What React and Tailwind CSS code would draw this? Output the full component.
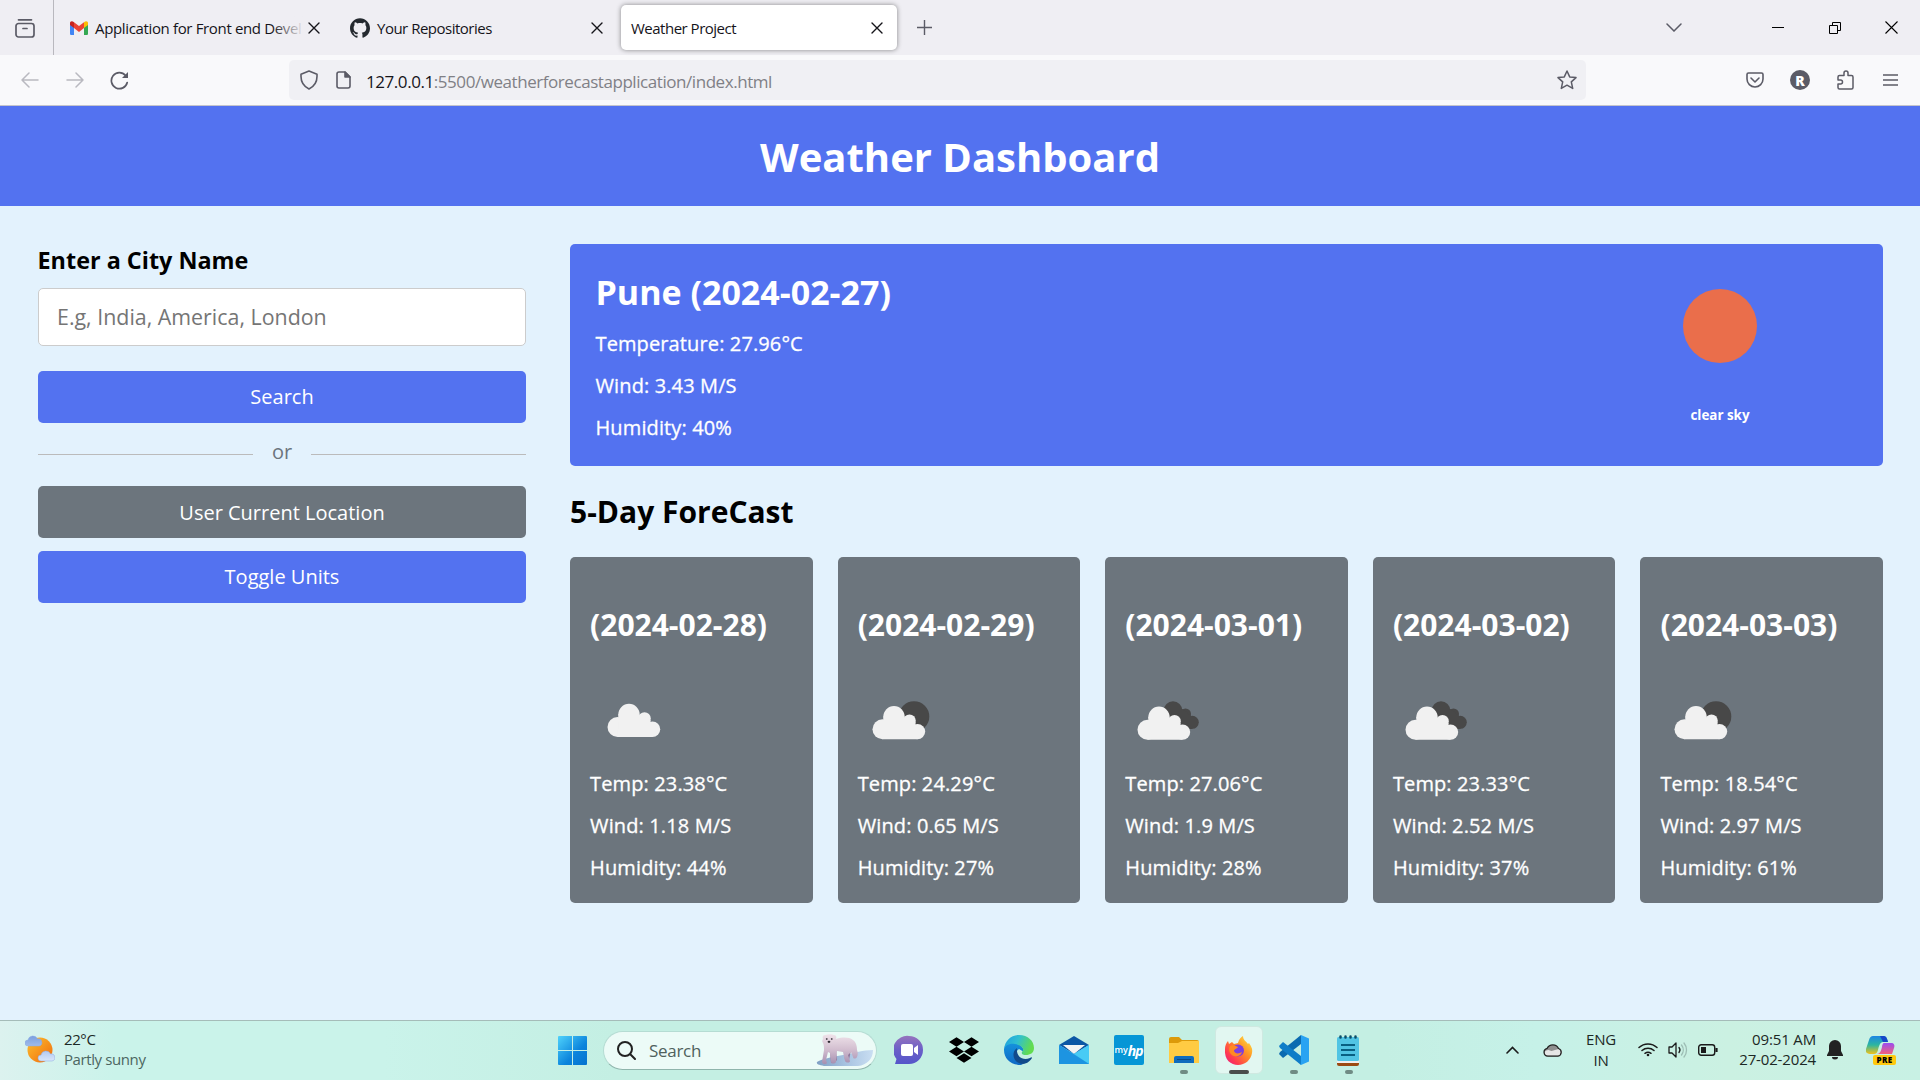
import React from "react";
import { SiDropbox, SiGithub } from "react-icons/si";

const TabX = () => (
  <svg className="h-3 w-3 shrink-0" viewBox="0 0 12 12" fill="none" stroke="#15141a" strokeWidth="1.4" strokeLinecap="round"><path d="M1 1l10 10M11 1L1 11" /></svg>
);

const frontOffset = { sun: "translate(-3 2.3)", cloud: "translate(-5 2.8)" };

const Cloud = ({ behind }) => (
  <svg className="ml-[6px] h-[60px] w-[76px]" viewBox="596.5 690 76 60">
    {behind === "sun" && <circle cx="646.500" cy="716.500" r="15.300" fill="#484848" />}
    {behind === "cloud" && (
      <g fill="#484848"><circle cx="638.500" cy="710.500" r="9.300" /><circle cx="651" cy="714" r="5.500" /><circle cx="657.800" cy="722.300" r="6.500" /><path d="M636 712l12-3 10 8v12h-14z" /></g>
    )}
    <g fill="#f1f1f1" transform={behind ? frontOffset[behind] : undefined}>
      <circle cx="618" cy="727" r="10" /><circle cx="629.500" cy="714.500" r="10.700" /><circle cx="645" cy="718.500" r="6.300" /><circle cx="653" cy="729.300" r="7.700" />
      <path d="M619 722v-8h18l14 6v10l2 7h-35z" />
    </g>
  </svg>
);

const forecast = [
  ["(2024-02-28)", "23.38", "1.18", "44", null],
  ["(2024-02-29)", "24.29", "0.65", "27", "sun"],
  ["(2024-03-01)", "27.06", "1.9", "28", "cloud"],
  ["(2024-03-02)", "23.33", "2.52", "37", "cloud"],
  ["(2024-03-03)", "18.54", "2.97", "61", "sun"],
];

function TabStrip() {
  return (
    <div className="flex h-[55px] items-center bg-[#efeef3] text-[15px] tracking-[-0.45px] text-[#15141a]">
      <div className="flex h-full w-[54px] items-center border-r border-[#b9b8be] pl-[15px]">
        <svg className="h-5 w-5" viewBox="0 0 20 20" fill="none" stroke="#5b5b66" strokeWidth="1.7" strokeLinecap="round"><rect x="1" y="5.500" width="18" height="13.500" rx="2.500" /><path d="M3.500 1.800h13M8 10.500h4" /></svg>
      </div>
      <div className="flex w-[281px] items-center pl-4">
        <svg className="h-[14px] w-[18px] shrink-0" viewBox="0 0 18 14"><path fill="#4285f4" d="M0 2v10.700C0 13.400.6 14 1.300 14H4V6z" /><path fill="#34a853" d="M14 14h2.700c.7 0 1.300-.6 1.300-1.300V2l-4 4z" /><path fill="#ea4335" d="M4 7V1.200l5 3.900 5-3.900V7l-5 3.900z" /><path fill="#c5221f" d="M0 2.200V4l4 3V1.200C2 -.4 0 .3 0 2.200z" /><path fill="#fbbc04" d="M14 1.200V7l4-3V2.200c0-1.900-2-2.600-4-1z" /></svg>
        <div className="relative ml-[7px] w-[209px] pt-[2px] whitespace-nowrap tracking-[-0.35px]">Application for Front end Devel<div className="absolute inset-y-0 right-0 w-8 bg-gradient-to-r from-transparent to-[#efeef3]" /></div>
        <div className="ml-[4px]"><TabX /></div>
      </div>
      <div className="flex w-[286px] items-center pl-[15px]">
        <SiGithub className="h-5 w-5 text-[#24292f]" />
        <span className="ml-[7px] pt-[2px] tracking-[-0.5px]">Your Repositories</span>
        <div className="mr-[18px] ml-auto"><TabX /></div>
      </div>
      <div className="flex h-[45px] w-[276px] items-center rounded-[5px] bg-white pr-[14px] pl-[10px] shadow-[0_0_5px_rgba(0,0,0,0.45)]">
        <span className="pt-[2px] tracking-[-0.5px]">Weather Project</span>
        <div className="ml-auto"><TabX /></div>
      </div>
      <svg className="ml-[20px] h-[15px] w-[15px]" viewBox="0 0 15 15" stroke="#5b5b66" strokeWidth="1.400"><path d="M7.500 0v15M0 7.500h15" /></svg>
      <svg className="ml-auto h-[9px] w-4" viewBox="0 0 16 9" fill="none" stroke="#5b5b66" strokeWidth="1.500" strokeLinecap="round"><path d="M1 1l7 7 7-7" /></svg>
      <div className="ml-[90px] h-px w-3 bg-black" />
      <svg className="ml-[45px] h-3 w-3" viewBox="0 0 12 12" fill="none" stroke="#000"><path d="M.5 3.500h8v8h-8zM3.500 3V.5h8v8H9" /></svg>
      <svg className="mr-[22px] ml-[44px] h-[13px] w-[13px]" viewBox="0 0 13 13" fill="none" stroke="#000" strokeWidth="1.100"><path d="M.5.5l12 12M12.500.5l-12 12" /></svg>
    </div>
  );
}

function Toolbar() {
  return (
    <div className="flex h-[51px] items-center border-b border-[#c4c4cc] bg-[#f9f9fb]">
      <svg className="ml-[21px] h-[18px] w-[18px]" viewBox="0 0 18 18" fill="none" stroke="#b9b9c0" strokeWidth="1.500" strokeLinecap="round" strokeLinejoin="round"><path d="M17 9H1M8 2L1 9l7 7" /></svg>
      <svg className="ml-[27px] h-[18px] w-[18px]" viewBox="0 0 18 18" fill="none" stroke="#b9b9c0" strokeWidth="1.500" strokeLinecap="round" strokeLinejoin="round"><path d="M1 9h16M10 2l7 7-7 7" /></svg>
      <svg className="mt-px ml-[26px] h-[19px] w-[19px]" viewBox="0 0 19 19" fill="none" stroke="#5b5b66" strokeWidth="1.700" strokeLinecap="round"><path d="M17.200 11.500A8 8 0 1 1 15.500 4.500" /><path d="M18 1v6h-6z" fill="#5b5b66" stroke="none" /></svg>
      <div className="ml-[160px] flex h-10 w-[1297px] items-center rounded-[5px] bg-[#f0f0f4] pl-[11px]">
        <svg className="h-5 w-[18px]" viewBox="0 0 18 20" fill="none" stroke="#5b5b66" strokeWidth="1.600" strokeLinejoin="round"><path d="M9 1l8 3.200v2.300c0 5.500-3 10-8 12.500-5-2.500-8-7-8-12.500V4.200z" /></svg>
        <svg className="ml-[18px] h-[18px] w-[15px]" viewBox="0 0 15 18" fill="none" stroke="#5b5b66" strokeWidth="1.600" strokeLinejoin="round"><path d="M3 1h6l5 5v9a2 2 0 0 1-2 2H3a2 2 0 0 1-2-2V3a2 2 0 0 1 2-2z" /><path fill="#5b5b66" d="M9 1v5h5z" /></svg>
        <span className="ml-[15px] pt-[3px] text-[17px] tracking-[-0.44px] text-[#808086]"><span className="text-[#15141a]">127.0.0.1</span>:5500/weatherforecastapplication/index.html</span>
        <svg className="mr-[9px] ml-auto h-5 w-5" viewBox="0 0 20 20" fill="none" stroke="#5b5b66" strokeWidth="1.500" strokeLinejoin="round"><path d="M10 1l2.700 5.900 6.300.7-4.700 4.300 1.400 6.500L10 15.200l-5.700 3.200 1.400-6.500L1 7.600l6.300-.7z" /></svg>
      </div>
      <svg className="ml-[160px] h-4 w-[18px]" viewBox="0 0 18 16" fill="none" stroke="#5b5b66" strokeWidth="1.600" strokeLinecap="round" strokeLinejoin="round"><path d="M2.500 1h13A1.500 1.500 0 0 1 17 2.500V7A8 8 0 0 1 1 7V2.500A1.500 1.500 0 0 1 2.500 1z" /><path d="M5 6l4 4 4-4" /></svg>
      <div className="ml-[26px] flex h-5 w-5 items-center justify-center rounded-full bg-[#5b5b66] text-[14px] font-extrabold text-white">R</div>
      <svg className="ml-[27px] h-5 w-[17px]" viewBox="0 0 17 20" fill="none" stroke="#5b5b66" strokeWidth="1.500" strokeLinejoin="round"><path d="M2.500 5.500H7V3a2 2 0 0 1 4 0v2.500h3.500a1.500 1.500 0 0 1 1.500 1.500v10.500a1.500 1.500 0 0 1-1.500 1.500h-12A1.500 1.500 0 0 1 1 17.500V14h2.500a2 2 0 0 0 0-4H1V7a1.500 1.500 0 0 1 1.500-1.500z" /></svg>
      <svg className="ml-[29px] h-3 w-[15px]" viewBox="0 0 15 12" stroke="#5b5b66" strokeWidth="1.300"><path d="M0 1h15M0 6h15M0 11h15" /></svg>
    </div>
  );
}

function Dashboard() {
  return (
    <div className="h-[914px] bg-[#e3f2fd] text-black">
      <h1 className="flex h-[100px] items-center justify-center bg-[#5372f0] pt-[2px] text-[40px] font-bold text-white">Weather Dashboard</h1>
      <div className="flex pt-[38px] pl-[38px]">
        <div className="flex w-[488px] flex-col">
          <h3 className="-ml-[0.5px] h-[44px] text-[23.4px] leading-[32px] font-bold">Enter a City Name</h3>
          <div className="flex h-[58px] items-center rounded-[5px] border border-[#ccc] bg-white px-[18px] text-[21.4px] text-[#757575]">E.g, India, America, London</div>
          <div className="mt-[25px] flex h-[52px] items-center justify-center rounded-[5px] bg-[#5372f0] text-[20px] text-white">Search</div>
          <div className="mt-[15px] flex h-[33px] items-center text-[20px] text-[#6c757d]">
            <div className="mt-[-1px] h-px flex-1 bg-[#bbb]" />
            <span className="mb-[5px] w-[58px] text-center">or</span>
            <div className="mt-[-1px] h-px flex-1 bg-[#bbb]" />
          </div>
          <div className="mt-[15px] flex h-[52px] items-center justify-center rounded-[5px] bg-[#6c757d] pt-[2px] text-[20px] text-white">User Current Location</div>
          <div className="mt-[13px] flex h-[52px] items-center justify-center rounded-[5px] bg-[#5372f0] text-[20px] text-white">Toggle Units</div>
        </div>
        <div className="ml-[44px] w-[1313px]">
          <div className="flex h-[222px] justify-between rounded-[5px] bg-[#5372f0] pr-[116px] pl-[25.500px] text-white">
            <div className="pt-[25px]">
              <h2 className="text-[34px] leading-[46px] font-bold">Pune (2024-02-27)</h2>
              <div className="mt-[8px] text-[20px] leading-[42px] font-medium tracking-[0.12px] [-webkit-text-stroke:0.3px_white]">
                <p>Temperature: 27.96°C</p><p>Wind: 3.43 M/S</p><p>Humidity: 40%</p>
              </div>
            </div>
            <div className="flex w-[94px] flex-col items-center pt-[45px]">
              <div className="h-[73.5px] w-[73.5px] rounded-full bg-[#ea6e4b]" />
              <h6 className="mt-[43.5px] text-[13.400px] leading-[18px] font-bold whitespace-nowrap">clear sky</h6>
            </div>
          </div>
          <h2 className="mt-[25px] text-[30px] leading-[41px] font-bold">5-Day ForeCast</h2>
          <div className="mt-[25px] grid grid-cols-5 gap-[25px]">
            {forecast.map(([d, t, w, h, b]) => (
              <div key={d} className="h-[346px] rounded-[5px] bg-[#6c757d] pl-[20.100px] text-white">
                <h3 className="pt-[47px] text-[30px] leading-[41px] font-bold">{d}</h3>
                <div className="mt-[45px] h-[60px]"><Cloud behind={b} /></div>
                <div className="mt-[13px] text-[20px] leading-[42px] font-medium tracking-[0.12px] [-webkit-text-stroke:0.3px_white]"><p>Temp: {t}°C</p><p>Wind: {w} M/S</p><p>Humidity: {h}%</p></div>
              </div>
            ))}
          </div>
        </div>
      </div>
    </div>
  );
}

function PolarBear() {
  return (
    <svg className="h-[32px] w-[58px]" viewBox="0 0 58 32">
      <defs>
        <linearGradient id="bear" x1="0" y1="0" x2="0" y2="1"><stop offset="0" stopColor="#efe3ea" /><stop offset=".5" stopColor="#d3bfd0" /><stop offset="1" stopColor="#a68fb0" /></linearGradient>
        <linearGradient id="ice" x1="0" y1="0" x2="1" y2="0"><stop offset="0" stopColor="#7f9fc4" /><stop offset=".5" stopColor="#a6c2e0" /><stop offset="1" stopColor="#c9def2" /></linearGradient>
      </defs>
      <path fill="url(#ice)" d="M1 28c4-3 15-5 26-7 12-2 20-5 30-5 0 9-6 15-15 16H8c-5-1-8-2-7-4z" />
      <path fill="#8f789c" d="M14 17h6l1 9-3 3h-3zM28 16h7l-2 10h-4z" />
      <path fill="url(#bear)" d="M7 5c-1-2 0-4 2-4 3-1 7-1 9 0 2 0 3 2 2 4 7-2 13-2 17 1 3 2 4 6 4 10 1 2 1 5 0 7-1 2-4 2-4 0l-2-5-3 3 2 6c0 2-4 2-5 0l-2-9-6-1-1 11c-1 2-5 2-5 0l-1-9-2-1-2 8 1 3c-1 2-5 1-5-1l2-12c0-3 0-5-1-7-1-1-1-3 0-4z" />
      <path d="M10.500 5h.5M15.500 5h.5" stroke="#2c2730" strokeWidth="1.300" strokeLinecap="round" /><ellipse cx="13" cy="7.800" rx="1.400" ry="1.100" fill="#2c2730" />
    </svg>
  );
}

const Slot = ({ children, dot }) => (
  <div className="relative flex h-12 w-[55px] items-center justify-center">
    {children}
    {dot && <div className="absolute bottom-0 h-1 w-2 rounded-full bg-[#6f8b84]" />}
  </div>
);

function Taskbar() {
  return (
    <div className="flex h-[60px] items-center border-t border-[#a5bcb9] bg-[linear-gradient(90deg,#dcf2ef_0%,#caf3ea_6%,#caf3ea_20%,#c4efe3_32%,#c4efe3_72%,#c6f1e8_80%,#cbf1e2_90%,#c8f1e4_100%)] text-[15px] text-[#1c2825]">
      <div className="flex w-[558px] items-center pl-[25px]">
        <svg className="-mt-[4px] h-[30px] w-[30px]" viewBox="0 0 30 30"><defs><linearGradient id="sun" x1="0" y1="0" x2="1" y2="1"><stop stopColor="#fdc02f" /><stop offset="1" stopColor="#f06a0c" /></linearGradient><linearGradient id="cl" x1="0" y1="0" x2="0" y2="1"><stop stopColor="#7a9fe0" /><stop offset="1" stopColor="#d9e6fa" /></linearGradient></defs><circle cx="15" cy="16" r="12.500" fill="url(#sun)" /><path fill="url(#cl)" stroke="#8aabe3" strokeWidth=".5" d="M3 12a3 3 0 0 1 0-6 5 5 0 0 1 9.500-1A3.500 3.500 0 0 1 14 12zM16 27a3 3 0 0 1 0-6 5 5 0 0 1 9.500-1A3.500 3.500 0 0 1 27 27z" /></svg>
        <div className="-mt-[4px] ml-[9px] leading-5 tracking-[-0.4px]"><p>22°C</p><p className="text-[#4c6661]">Partly sunny</p></div>
      </div>
      <svg className="h-[29px] w-[29px]" viewBox="0 0 29 29"><defs><linearGradient id="win" x1="0" y1="0" x2="1" y2="1"><stop stopColor="#4fd2fb" /><stop offset=".6" stopColor="#0b84dc" /><stop offset="1" stopColor="#0472cf" /></linearGradient></defs><path fill="url(#win)" d="M1 0h13v14H0V1a1 1 0 0 1 1-1zM15 0h13a1 1 0 0 1 1 1v13H15zM0 15h14v14H1a1 1 0 0 1-1-1zM15 15h14v13a1 1 0 0 1-1 1H15z" /></svg>
      <div className="-mt-px ml-[16px] flex h-[39px] w-[274px] items-center rounded-full border border-[#b5dcd3] border-b-[#8fb5ac] bg-[#ecfbf7] pl-[13px]">
        <svg className="h-[19px] w-[19px]" viewBox="0 0 19 19" fill="none" stroke="#222" strokeWidth="2" strokeLinecap="round"><circle cx="8" cy="8" r="7" /><path d="M13.300 13.300L18 18" /></svg>
        <span className="ml-[13px] pt-px text-[17px] tracking-[-0.3px] text-[#4f615d]">Search</span>
        <div className="mr-[2px] ml-auto"><PolarBear /></div>
      </div>
      <div className="-mt-px ml-[4px] flex">
        <Slot><svg className="h-[30px] w-[30px]" viewBox="0 0 30 30"><defs><linearGradient id="chat" x1="0" y1="0" x2="0" y2="1"><stop stopColor="#9673bd" /><stop offset=".5" stopColor="#6a5fc8" /><stop offset="1" stopColor="#5555ca" /></linearGradient></defs><path fill="url(#chat)" d="M15 1a14 14 0 0 1 0 28H1l1.500-5A14 14 0 0 1 15 1z" /><rect x="7" y="9" width="12" height="12" rx="2" fill="#fff" /><path fill="#fff" d="M20 13l4-3v10l-4-3z" /></svg></Slot>
        <Slot><SiDropbox className="h-[30px] w-[30px] text-black" /></Slot>
        <Slot><svg className="h-[30px] w-[30px]" viewBox="0 0 30 30"><defs><linearGradient id="e1" x1="0" y1="0" x2="1" y2=".3"><stop stopColor="#1b9de2" /><stop offset=".5" stopColor="#30bfd0" /><stop offset="1" stopColor="#62dc50" /></linearGradient><linearGradient id="e2" x1="0" y1="0" x2="0" y2="1"><stop stopColor="#1593dd" /><stop offset="1" stopColor="#0f68c4" /></linearGradient></defs><path fill="url(#e2)" d="M0 14C1 9 6 7 11 8c6 1 9 5 9 9l-5-3c-5 3-3 10 4 15l-2 1C7 30 0 24 0 15z" /><path fill="#114a8b" d="M13 13c-7 5-3 16 6 16 4 0 8-4 9-6 0-1-1-1-2 0-8 3-14-2-13-10z" /><path fill="url(#e1)" d="M0 14C1 6 7 0 15 0c9 0 15 6 15 13 0 5-4 7-8 7-3 0-5-1-4-3 3-3 0-7-7-8-6-1-10 2-11 5z" /></svg></Slot>
        <Slot><svg className="h-[30px] w-[30px]" viewBox="0 0 30 30"><path fill="#0c57a5" d="M0 10L15 1l15 9-15 9z" /><path fill="#f4f4f4" d="M4 10h22l-11 9z" /><path fill="#2caeea" d="M0 10l15 9 15-9v19H0z" /><path fill="#48cbf5" d="M15 19l15-9v19z" /><path fill="#1686db" d="M0 10v19h30z" opacity=".65" /></svg></Slot>
        <Slot><div className="flex h-[30px] w-[30px] items-center justify-center rounded-[2px] bg-[#0696d6] text-white"><span className="text-[9px] font-semibold">my</span><span className="text-[14px] font-bold italic tracking-[-1px]">hp</span></div></Slot>
        <Slot dot><svg className="h-[27px] w-[30px]" viewBox="0 0 30 27"><path fill="#dc9a0a" d="M0 2a2 2 0 0 1 2-2h8l3 3h15a2 2 0 0 1 2 2v7H0z" /><path fill="#ffcb43" d="M0 6h9l4-2h17v22H0z" /><path fill="#0f6cbd" d="M5 26v-5a2 2 0 0 1 2-2h16a2 2 0 0 1 2 2v5z" /><path stroke="#0b4a85" d="M8 22.500h14" /></svg></Slot>
        <Slot>
          <div className="relative flex h-12 w-12 items-center justify-center rounded-md border border-[#cfe9e1] bg-[#e2f7f1]">
            <svg className="h-[29px] w-[29px]" viewBox="0 0 29 29"><defs><linearGradient id="ff" x1="1" y1="0" x2="0" y2="1"><stop stopColor="#fff04a" /><stop offset=".4" stopColor="#ff9324" /><stop offset=".75" stopColor="#ff3a50" /><stop offset="1" stopColor="#e5188b" /></linearGradient></defs><path fill="url(#ff)" d="M1 13c0-3 1-6 3-8l1 3 3-2 2 2 4-1c1-4 3-6 5-7 0 4 3 5 5 8l1-1c2 3 4 6 3 10-1 7-7 12-14 12S0 24 1 13z" /><circle cx="14" cy="14.500" r="6" fill="#7b3fe0" /><path fill="#ff8a22" d="M6 10c3-2 6 0 8 1-1 2-4 2-4 4 1 3 5 3 8 1-1 4-5 5-8 4-4-1-6-6-4-10z" /></svg>
            <div className="absolute -bottom-px h-1 w-5 rounded-full bg-[#4a4d4c]" />
          </div>
        </Slot>
        <Slot dot><svg className="h-[30px] w-[30px]" viewBox="0 0 30 30"><path fill="#0a6ab0" d="M22 0v9L4 23l-4-4 1-2z" /><path fill="#0f7dc8" d="M0 11l4-4 18 14v9L1 13z" /><path fill="#29a3f2" d="M22 0l8 3.500v23L22 30c-1 0 0-1 0-2z" /></svg></Slot>
        <Slot dot><svg className="h-[31px] w-[23px]" viewBox="0 0 23 31"><path fill="#9b4a12" d="M0 27h22v2a2 2 0 0 1-2 2H2a2 2 0 0 1-2-2z" /><path fill="#eee" d="M0 25h22v3H0z" /><rect y="2" width="22" height="24" rx="1.500" fill="#51c4e4" /><path stroke="#085f82" strokeWidth="1.800" d="M4 10h14M4 15h14M4 20h14" /><path stroke="#0b4d69" strokeWidth="2.500" strokeLinecap="round" d="M3.500 1.500v1M8.500 1.500v1M13.500 1.500v1M18.500 1.500v1" /></svg></Slot>
      </div>
      <div className="-mt-[2px] ml-auto flex items-center">
        <svg className="h-2 w-[13px]" viewBox="0 0 13 8" fill="none" stroke="#1b1b1b" strokeWidth="1.600" strokeLinecap="round"><path d="M1 7l5.500-5.500L12 7" /></svg>
        <svg className="ml-[24px] h-[14px] w-5" viewBox="0 0 20 14"><path fill="#8f8f8f" d="M4.800 13.200a4 4 0 0 1-.6-7.900 6.300 6.300 0 0 1 11.300.2 4 4 0 0 1-.5 7.700z" /><path fill="#e6e6e6" d="M1.500 10c0-2 2-3 4-3l3 1 7-2c3 0 4 2 3.500 4s-2 2.800-4 2.800H5C3 12.800 1.500 12 1.500 10z" /><path fill="none" stroke="#222" strokeWidth="1.300" d="M4.800 13.200a4 4 0 0 1-.6-7.900 6.300 6.300 0 0 1 11.300.2 4 4 0 0 1-.5 7.700z" /></svg>
        <div className="w-[76px] text-center leading-[21px] tracking-[-0.2px]"><p>ENG</p><p>IN</p></div>
        <svg className="-ml-px h-[15px] w-5" viewBox="0 0 20 15" fill="none" stroke="#1b1b1b" strokeWidth="1.500" strokeLinecap="round"><path d="M1 5.500a13 13 0 0 1 18 0M4 8.500a9 9 0 0 1 12 0M7 11.300a5 5 0 0 1 6 0" /><circle cx="10" cy="13" r="1.300" fill="#1b1b1b" stroke="none" /></svg>
        <svg className="ml-[10px] h-4 w-5" viewBox="0 0 20 16" fill="none" stroke="#1b1b1b" strokeWidth="1.300" strokeLinecap="round" strokeLinejoin="round"><path d="M1 5h3l4-4v14l-4-4H1zM11 5.500a4 4 0 0 1 0 5" /><path stroke="#9dbdb4" d="M13.500 3a8 8 0 0 1 0 10M16 1a11 11 0 0 1 0 14" /></svg>
        <svg className="ml-[10px] h-3 w-5" viewBox="0 0 20 12" fill="none" stroke="#1b1b1b" strokeWidth="1.400"><rect x=".7" y=".7" width="16" height="10.600" rx="2.500" /><rect x="3" y="3" width="5" height="6" fill="#1b1b1b" stroke="none" /><path d="M18.500 4v4" strokeWidth="2.200" /></svg>
        <div className="-mt-[2px] w-[98px] text-right leading-5 tracking-[-0.15px]"><p>09:51 AM</p><p>27-02-2024</p></div>
        <svg className="ml-[11px] h-5 w-4" viewBox="0 0 16 20"><path fill="#222" d="M8 0a6 6 0 0 1 6 6v5l2 4v1H0v-1l2-4V6a6 6 0 0 1 6-6zM5 17h6a3 2.500 0 0 1-6 0z" /></svg>
        <div className="relative mr-[24px] ml-[23px] h-[30px] w-[30px]">
          <svg className="h-[30px] w-[30px]" viewBox="0 0 30 30"><defs><linearGradient id="c1" x1="0" y1="0" x2="0" y2="1"><stop stopColor="#1c86e4" /><stop offset=".5" stopColor="#2cb6a0" /><stop offset="1" stopColor="#f2c21a" /></linearGradient><linearGradient id="c2" x1="0" y1="0" x2="0" y2="1"><stop stopColor="#9a4cf0" /><stop offset="1" stopColor="#f3617c" /></linearGradient></defs><path fill="url(#c1)" d="M7 1h11c2 0 3 2 4 6h-5c-3 0-4 4-5 8-1 3-2 4-4 4H4c-3 0-5-2-4-5L3 5c1-3 2-4 4-4z" /><path fill="#1648c8" d="M14 1h4c2 0 3 2 4 6h-5z" /><path fill="url(#c2)" d="M18 8h7c3 0 4 2 3 5l-2 6H11c3 0 4-3 5-7 0-2 1-4 2-4z" /></svg>
          <div className="absolute top-[20px] left-[7px] flex h-[10px] w-[23px] items-center justify-center rounded-[2px] bg-[#ffc90e] text-[8px] font-extrabold tracking-[0.4px] text-black">PRE</div>
        </div>
      </div>
    </div>
  );
}

export default function App() {
  return (
    <div className="h-[1080px] w-[1920px] overflow-hidden font-['Open_Sans','Noto_Sans',sans-serif]">
      <TabStrip />
      <Toolbar />
      <Dashboard />
      <Taskbar />
    </div>
  );
}
